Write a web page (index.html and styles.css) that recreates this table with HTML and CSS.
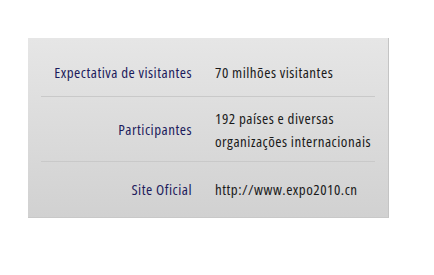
FILE: index.html
```html
<!DOCTYPE html>
<html lang="pt">
<head>
<meta charset="utf-8">
<link rel="stylesheet" href="styles.css">
</head>
<body>
<div class="card">
  <div class="row row-1">
    <div class="label">Expectativa de visitantes</div>
    <div class="value">70 milhões visitantes</div>
  </div>
  <div class="row row-2">
    <div class="label">Participantes</div>
    <div class="value">192 países e diversas<br>organizações internacionais</div>
  </div>
  <div class="row row-3">
    <div class="label">Site Oficial</div>
    <div class="value">http://www.expo2010.cn</div>
  </div>
</div>
</body>
</html>
```

FILE: styles.css
```css
html, body {
  margin: 0;
  background: #ffffff;
}
body {
  padding: 38px 0 0 28px;
  font-family: "Open Sans", "Noto Sans", sans-serif;
  font-size: 15px;
  font-stretch: 85%;
  letter-spacing: 0.5px;
}
.card {
  width: 361px;
  height: 180px;
  padding-top: 9px;
  box-sizing: border-box;
  background: linear-gradient(#e6e6e6, #d1d1d1);
  border-right: 1px solid #c4c4c4;
  border-bottom: 1px solid #c8c8c8;
  display: flex;
  flex-direction: column;
}
.row {
  display: grid;
  grid-template-columns: 164px 1fr;
  column-gap: 23px;
  align-items: center;
  line-height: 23px;
}
.row-1 { height: 50px; }
.row-2 { height: 65px; }
.row-3 { flex: 1; }
.row-1, .row-2 {
  position: relative;
}
.row-1::after, .row-2::after {
  content: "";
  position: absolute;
  left: 13px;
  right: 13px;
  bottom: 0;
  height: 1px;
  background: #c9c9c9;
}
.label {
  text-align: right;
  color: #1c1b5c;
}
.value {
  color: #1a1a1a;
}
```
